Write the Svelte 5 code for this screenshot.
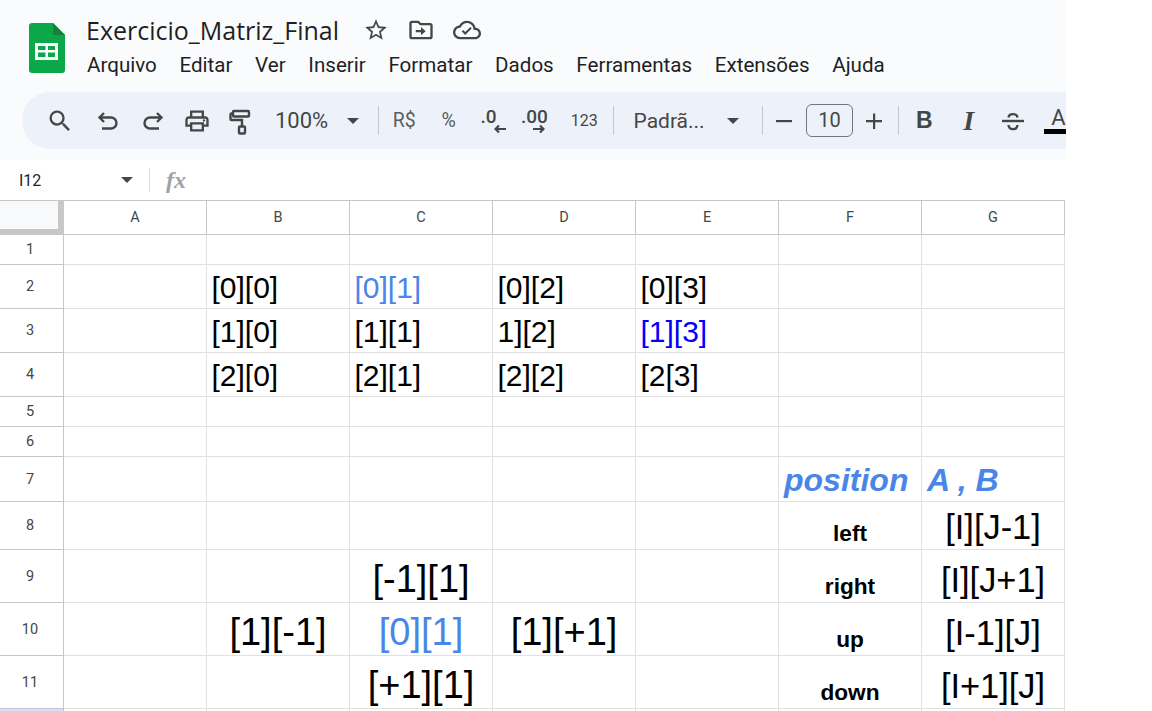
<script>
  const menu = ['Arquivo', 'Editar', 'Ver', 'Inserir', 'Formatar', 'Dados', 'Ferramentas', 'Extensões', 'Ajuda'];
  const cols = ['A', 'B', 'C', 'D', 'E', 'F', 'G'];

  // each row: height with its bottom line, then cell text by column letter
  const rows = [
    { h: 30, cells: {} },
    { h: 44, cells: {
      B: { t: '[0][0]', c: 'big' },
      C: { t: '[0][1]', c: 'big sky' },
      D: { t: '[0][2]', c: 'big' },
      E: { t: '[0][3]', c: 'big' },
    } },
    { h: 44, cells: {
      B: { t: '[1][0]', c: 'big' },
      C: { t: '[1][1]', c: 'big' },
      D: { t: '1][2]', c: 'big' },
      E: { t: '[1][3]', c: 'big navy' },
    } },
    { h: 44, cells: {
      B: { t: '[2][0]', c: 'big' },
      C: { t: '[2][1]', c: 'big' },
      D: { t: '[2][2]', c: 'big' },
      E: { t: '[2[3]', c: 'big' },
    } },
    { h: 30, cells: {} },
    { h: 30, cells: {} },
    { h: 45, cells: {
      F: { t: 'position', c: 'title' },
      G: { t: 'A , B', c: 'title' },
    } },
    { h: 48, cells: {
      F: { t: 'left', c: 'label' },
      G: { t: '[I][J-1]', c: 'idx' },
    } },
    { h: 53, cells: {
      C: { t: '[-1][1]', c: 'huge' },
      F: { t: 'right', c: 'label' },
      G: { t: '[I][J+1]', c: 'idx' },
    } },
    { h: 53, cells: {
      B: { t: '[1][-1]', c: 'huge' },
      C: { t: '[0][1]', c: 'huge sky' },
      D: { t: '[1][+1]', c: 'huge' },
      F: { t: 'up', c: 'label' },
      G: { t: '[I-1][J]', c: 'idx' },
    } },
    { h: 53, cells: {
      C: { t: '[+1][1]', c: 'huge' },
      F: { t: 'down', c: 'label' },
      G: { t: '[I+1][J]', c: 'idx' },
    } },
    { h: 30, cells: {}, active: true },
  ];
</script>

<div class="page">
  <header class="chrome">
    <div class="top">
      <svg class="logo" width="36" height="50" viewBox="0 0 36 50">
        <path d="M3 0H24L36 12V47a3 3 0 0 1-3 3H3a3 3 0 0 1-3-3V3a3 3 0 0 1 3-3z" fill="#0ba84a" />
        <path d="M24 0L36 12H24z" fill="#188038" />
        <path fill-rule="evenodd" fill="#fff" d="M6 20H29V37H6zM9 23V27H16.5V23zM19 23V27H26V23zM9 29.5V34H16.5V29.5zM19 29.5V34H26V29.5z" />
      </svg>
      <div class="titles">
        <div class="title-row">
          <span class="doc">Exercicio_Matriz_Final</span>
          <svg class="t-icon" width="26" height="26" viewBox="0 0 24 24"><path d="M22 9.24l-7.19-.62L12 2 9.19 8.63 2 9.24l5.46 4.73L5.82 21 12 17.27 18.18 21l-1.63-7.03L22 9.24zM12 15.4l-3.76 2.27 1-4.28-3.32-2.88 4.38-.38L12 6.1l1.71 4.04 4.38.38-3.32 2.88 1 4.28L12 15.4z" /></svg>
          <svg class="t-icon" width="28" height="28" viewBox="0 0 24 24"><path d="M20 6h-8l-2-2H4c-1.1 0-2 .9-2 2v12c0 1.1.9 2 2 2h16c1.1 0 2-.9 2-2V8c0-1.1-.9-2-2-2zm0 12H4V6h5.17l2 2H20v10z" /><path d="M7.5 12h4.5V9.5l4 3.5-4 3.5V14H7.5z" /></svg>
          <svg class="t-icon" width="28" height="28" viewBox="0 0 24 24"><path d="M19.35 10.04C18.67 6.59 15.64 4 12 4 9.11 4 6.6 5.64 5.35 8.04 2.34 8.36 0 10.91 0 14c0 3.31 2.69 6 6 6h13c2.76 0 5-2.24 5-5 0-2.64-2.05-4.78-4.65-4.96zM19 18H6c-2.21 0-4-1.79-4-4 0-2.05 1.53-3.76 3.56-3.97l1.07-.11.5-.95C8.08 7.14 9.94 6 12 6c2.62 0 4.88 1.86 5.39 4.43l.3 1.5 1.53.11c1.56.1 2.78 1.41 2.78 2.96 0 1.65-1.35 3-3 3z" /><path d="M10.5 16.2l-3-3 1.2-1.2 1.8 1.8 4.3-4.3 1.2 1.2z" /></svg>
        </div>
        <nav class="menu">
          {#each menu as item}
            <span>{item}</span>
          {/each}
        </nav>
      </div>
    </div>

    <div class="toolbar">
      <div class="btn">
        <svg width="28" height="28" viewBox="0 0 24 24"><path d="M15.5 14h-.79l-.28-.27A6.471 6.471 0 0 0 16 9.5 6.5 6.5 0 1 0 9.5 16c1.61 0 3.09-.59 4.23-1.57l.27.28v.79l5 4.99L20.49 19l-4.99-5zm-6 0C7.01 14 5 11.99 5 9.5S7.01 5 9.5 5 14 7.01 14 9.5 11.99 14 9.5 14z" /></svg>
      </div>
      <div class="btn first-gap">
        <svg width="28" height="28" viewBox="0 0 28 28"><path class="line" d="M10 6L5.500 10.500 10 15M5.500 10.500H17a5.500 5.500 0 0 1 0 11H8" /></svg>
      </div>
      <div class="btn">
        <svg width="28" height="28" viewBox="0 0 28 28"><path class="line" d="M18 6l4.500 4.500L18 15M22.500 10.500H11a5.500 5.500 0 0 0 0 11H20" /></svg>
      </div>
      <div class="btn">
        <svg width="28" height="28" viewBox="0 0 24 24"><path d="M19 8h-1V3H6v5H5c-1.660 0-3 1.340-3 3v6h4v4h12v-4h4v-6c0-1.660-1.340-3-3-3zM8 5h8v3H8V5zm8 12v2H8v-4h8v2zm2-2v-2H6v2H4v-4c0-.55.45-1 1-1h14c.55 0 1 .45 1 1v4h-2z" /><circle cx="18" cy="11.500" r="1" /></svg>
      </div>
      <div class="btn paint">
        <svg width="28" height="28" viewBox="0 0 28 28"><rect class="line" x="8" y="4" width="16" height="5.500" rx="1" /><path class="line" d="M8 6.500H6.500a1 1 0 0 0-1 1V12a1 1 0 0 0 1 1H17V19" /><rect class="line" x="14" y="19.500" width="6" height="7" rx="1" /></svg>
      </div>
      <div class="zoom">100%</div>
      <div class="caret-wrap"><i class="caret"></i></div>
      <i class="sep sep-zoom"></i>
      <div class="btn t-btn currency">R$</div>
      <div class="btn t-btn currency">%</div>
      <div class="btn dec one">
        <span>.0</span>
        <svg width="12" height="12" viewBox="0 0 12 12"><path class="line thin" d="M12 6H1.500M5 2.500L1.500 6 5 9.500" /></svg>
      </div>
      <div class="btn dec two">
        <span>.00</span>
        <svg width="12" height="12" viewBox="0 0 12 12"><path class="line thin" d="M0 6H10.500M7 2.500L10.500 6 7 9.500" /></svg>
      </div>
      <div class="btn t-btn num">123</div>
      <i class="sep sep-font"></i>
      <div class="font-name">Padrã...</div>
      <div class="caret-wrap font-caret"><i class="caret"></i></div>
      <i class="sep"></i>
      <div class="step minus">
        <svg width="24" height="24" viewBox="0 0 24 24"><path d="M4 11h16v2.200H4z" /></svg>
      </div>
      <div class="size">10</div>
      <div class="step plus">
        <svg width="24" height="24" viewBox="0 0 24 24"><path d="M11 4.500h2.200V11H20v2.200h-6.800V20H11v-6.800H4V11h7z" /></svg>
      </div>
      <i class="sep sep-plus"></i>
      <div class="btn t-btn bold">B</div>
      <div class="btn t-btn ital">I</div>
      <div class="btn">
        <svg width="28" height="28" viewBox="0 0 28 28"><path class="line" d="M3 14H25" /><path class="line" d="M9.500 10.500C10 6 18 6 18.500 10.500M9.500 18C10 23.500 18 23.500 18.500 18" /></svg>
      </div>
      <div class="color">
        <span>A</span>
        <i></i>
      </div>
    </div>
  </header>

  <div class="formula">
    <div class="name-box">I12</div>
    <i class="caret dark"></i>
    <i class="bar-sep"></i>
    <span class="fx">fx</span>
  </div>

  <div class="sheet">
    <div class="line-row head">
      <div class="corner"></div>
      {#each cols as col}
        <div class="col-head">{col}</div>
      {/each}
    </div>
    {#each rows as row, i}
      <div class="line-row" style:height="{row.h}px">
        <div class="row-head" class:active={row.active}>{row.active ? '' : i + 1}</div>
        {#each cols as col}
          <div class="cell {row.cells[col]?.c ?? ''}">{row.cells[col]?.t ?? ''}</div>
        {/each}
      </div>
    {/each}
  </div>
</div>

<style>
  :global(body) {
    background: #fff;
  }

  .page {
    width: 1152px;
    height: 711px;
    overflow: hidden;
    background: #fff;
    font-family: Roboto, "Liberation Sans", sans-serif;
  }

  .chrome {
    width: 1066px;
    height: 160px;
    background: #f9fbfd;
    box-sizing: border-box;
    overflow: hidden;
  }

  .top {
    display: flex;
    height: 92px;
    padding-left: 29px;
    box-sizing: border-box;
  }

  .logo {
    margin-top: 23px;
    flex: none;
  }

  .titles {
    margin-left: 21px;
    padding-top: 13px;
  }

  .title-row {
    display: flex;
    align-items: center;
    height: 34px;
  }

  .doc {
    font-family: "Open Sans", sans-serif;
    font-size: 25px;
    color: #1f1f1f;
    margin-right: 24px;
  }

  .t-icon {
    fill: #444746;
    margin-right: 18px;
  }

  .menu {
    display: flex;
    gap: 22.600px;
    margin-top: 6px;
    padding-left: 1px;
    font-size: 20.600px;
    color: #1f1f1f;
  }

  .toolbar {
    display: flex;
    align-items: center;
    height: 57px;
    margin-left: 22px;
    padding-left: 16px;
    background: #edf2fa;
    border-radius: 28px 0 0 28px;
    color: #444746;
    white-space: nowrap;
  }

  .toolbar svg {
    fill: #444746;
  }

  .toolbar .line {
    fill: none;
    stroke: #444746;
    stroke-width: 2.400;
  }

  .toolbar .thin {
    stroke-width: 2.200;
  }

  .btn {
    flex: none;
    display: flex;
    align-items: center;
    justify-content: center;
    width: 44.500px;
    height: 40px;
  }

  .first-gap {
    margin-left: 3.500px;
  }

  .paint {
    margin-left: -3px;
  }

  .dec {
    flex-direction: column;
    align-items: flex-start;
    justify-content: flex-start;
    box-sizing: border-box;
    padding-top: 9px;
    font-size: 19px;
    font-weight: 500;
  }

  .dec span {
    line-height: 14px;
  }

  .dec svg {
    margin-top: -1px;
  }

  .dec.one {
    padding-left: 9.500px;
  }

  .dec.one svg {
    margin-left: 13.500px;
  }

  .dec.two {
    padding-left: 5.500px;
  }

  .dec.two svg {
    margin-left: 11.500px;
  }

  .zoom {
    flex: none;
    width: 68px;
    margin-left: 14px;
    font-size: 22px;
  }

  .caret-wrap {
    flex: none;
    display: flex;
    justify-content: center;
    width: 20px;
  }

  .caret {
    display: block;
    width: 0;
    height: 0;
    border-left: 6.500px solid transparent;
    border-right: 6.500px solid transparent;
    border-top: 6.500px solid #444746;
  }

  .sep {
    flex: none;
    width: 1px;
    height: 29px;
    margin: 0 3px 0 14px;
    background: #c7c7c7;
  }

  .sep-zoom {
    margin-left: 15px;
  }

  .t-btn {
    font-size: 19.500px;
  }

  .currency {
    color: #5a5e60;
  }

  .num {
    font-size: 16px;
    margin-left: 2px;
  }

  .sep-font {
    margin-left: 6px;
    margin-right: 20px;
  }

  .sep-plus {
    margin-left: 7px;
  }

  .font-name {
    flex: none;
    width: 89px;
    font-size: 21px;
  }

  .font-caret {
    margin-right: 5px;
  }

  .step {
    flex: none;
    display: flex;
    justify-content: center;
    width: 34px;
  }

  .minus {
    margin-left: 1.500px;
    margin-right: 5px;
  }

  .plus {
    margin-left: 4px;
  }

  .size {
    flex: none;
    width: 45px;
    height: 31px;
    line-height: 31px;
    border: 1px solid #747775;
    border-radius: 6px;
    text-align: center;
    font-size: 20px;
    color: #444746;
  }

  .bold {
    font-family: "Liberation Sans", sans-serif;
    font-size: 23px;
    font-weight: 700;
  }

  .ital {
    font-family: "Liberation Serif", serif;
    font-size: 28px;
    font-weight: 700;
    font-style: italic;
  }

  .color {
    flex: none;
    align-self: flex-start;
    position: relative;
    width: 30px;
    height: 27px;
    margin-top: 15px;
    margin-left: 8px;
    text-align: center;
    font-size: 22px;
    line-height: 22px;
  }

  .color i {
    position: absolute;
    left: 0;
    right: 0;
    bottom: 0;
    height: 5px;
    background: #000;
  }

  .formula {
    display: flex;
    align-items: center;
    height: 40px;
    width: 1066px;
    box-sizing: border-box;
    padding-left: 19px;
  }

  .name-box {
    width: 102px;
    font-size: 16px;
    color: #1f1f1f;
  }

  .caret.dark {
    border-left-width: 6px;
    border-right-width: 6px;
    border-top-width: 6px;
  }

  .bar-sep {
    width: 1px;
    height: 24px;
    margin: 0 16px 0 16px;
    background: #dadce0;
  }

  .fx {
    font-family: "Liberation Serif", serif;
    font-size: 24px;
    font-weight: 700;
    font-style: italic;
    color: #a0a3a6;
  }

  .sheet {
    width: 1065px;
    border-top: 1px solid #c7c7c7;
  }

  .line-row {
    display: grid;
    grid-template-columns: 64px repeat(7, 143px);
    box-sizing: border-box;
    font-family: "Liberation Sans", Arial, sans-serif;
  }

  .head {
    height: 34px;
  }

  .corner {
    box-sizing: border-box;
    background: #f8f9fa;
    border-right: 6px solid #c7c7c7;
    border-bottom: 6px solid #c7c7c7;
  }

  .col-head {
    display: flex;
    align-items: center;
    justify-content: center;
    border-right: 1px solid #c7c7c7;
    border-bottom: 1px solid #c7c7c7;
    font-family: Roboto, sans-serif;
    font-size: 14.500px;
    color: #444746;
  }

  .row-head {
    display: flex;
    align-items: center;
    justify-content: center;
    padding-right: 3px;
    border-right: 1px solid #c7c7c7;
    border-bottom: 1px solid #c7c7c7;
    font-family: Roboto, sans-serif;
    font-size: 14.500px;
    color: #444746;
    box-sizing: border-box;
  }

  .row-head.active {
    background: #d3e3fd;
  }

  .cell {
    display: flex;
    align-items: flex-end;
    box-sizing: border-box;
    padding: 0 5px 1px;
    border-right: 1px solid #e1e1e1;
    border-bottom: 1px solid #e1e1e1;
    color: #000;
    white-space: nowrap;
    min-width: 0;
  }

  .big {
    font-size: 30px;
    padding-left: 4.500px;
    padding-bottom: 3px;
  }

  .huge {
    font-size: 38px;
    justify-content: center;
  }

  .idx {
    font-size: 34.400px;
    padding-bottom: 2px;
    justify-content: center;
  }

  .label {
    font-size: 22.670px;
    font-weight: 700;
    padding-bottom: 2px;
    justify-content: center;
  }

  .title {
    font-size: 32px;
    font-weight: 700;
    font-style: italic;
    padding-bottom: 2px;
    color: #4a86e8;
  }

  .sky {
    color: #4a86e8;
  }

  .navy {
    color: #0000ff;
  }
</style>
